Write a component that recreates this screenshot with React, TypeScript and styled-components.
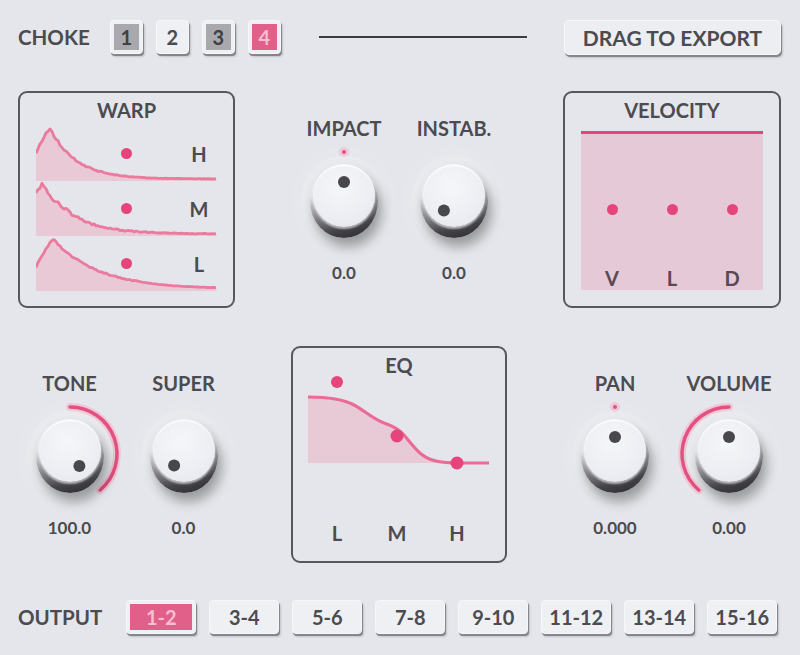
import React from "react"
import styled, { createGlobalStyle } from "styled-components"

const PINK = "#e5457a"
const INK = "#4b4b50"

const rand = (i: number, seed: number) => {
  const s = Math.sin(i * 12.9898 + seed * 78.233) * 43758.5453
  return s - Math.floor(s)
}

type WarpCfg = { letter: string; startY: number; peakX: number; peakY: number; decay: number; jitter: number; seed: number }

const warps: WarpCfg[] = [
  { letter: "H", startY: 28, peakX: 14, peakY: 2, decay: 26, jitter: 2.5, seed: 1 },
  { letter: "M", startY: 14, peakX: 6, peakY: 2, decay: 31, jitter: 4.5, seed: 2 },
  { letter: "L", startY: 32, peakX: 17, peakY: 3, decay: 45, jitter: 1.6, seed: 3 },
]

function warpPath(c: WarpCfg) {
  const base = 53
  const pts: string[] = []
  for (let x = 0; x <= 181; x += 2) {
    let y = x < c.peakX
      ? c.startY + (c.peakY - c.startY) * Math.pow(x / c.peakX, 0.8)
      : base - (base - c.peakY) * Math.exp(-(x - c.peakX) / c.decay)
    const amp = c.jitter * Math.min(1, (base - y + 4) / 25)
    y += (rand(x, c.seed) - 0.5) * amp
    pts.push(`${x},${Math.min(y, base).toFixed(1)}`)
  }
  const line = "M" + pts.join(" L")
  return { line, fill: line + " L181,55 L0,55 Z" }
}

const arcPath = (end: number) => {
  const r = 47
  const a = (end * Math.PI) / 180
  const x = 57 + r * Math.sin(a)
  const y = 57 - r * Math.cos(a)
  return `M57,10 A${r},${r} 0 ${Math.abs(end) > 180 ? 1 : 0} ${end > 0 ? 1 : 0} ${x.toFixed(1)},${y.toFixed(1)}`
}

type KnobProps = { label: string; value: string; angle: number; arc?: number; dot?: boolean }

const Knob = ({ label, value, angle, arc, dot }: KnobProps) => {
  const a = (angle * Math.PI) / 180
  const r = 16 - 2 * Math.cos(a)
  return (
    <KnobCol>
      <KnobLabel>{label}</KnobLabel>
      <KnobArea>
        <ArcSvg width="114" height="114">
          {arc !== undefined && (
            <>
              <path d={arcPath(arc)} stroke="#f2a9c0" strokeOpacity="0.55" strokeWidth="8" fill="none" strokeLinecap="round" />
              <path d={arcPath(arc)} stroke={PINK} strokeWidth="3.5" fill="none" strokeLinecap="round" />
            </>
          )}
          {dot && (
            <>
              <circle cx="57" cy="10" r="5" fill="#f4b6ca" opacity="0.7" />
              <circle cx="57" cy="10" r="2" fill={PINK} />
            </>
          )}
        </ArcSvg>
        <KnobBody>
          <KnobFace>
            <Pointer style={{ transform: `translate(${(r * Math.sin(a)).toFixed(1)}px, ${(-r * Math.cos(a)).toFixed(1)}px)` }} />
          </KnobFace>
        </KnobBody>
      </KnobArea>
      <KnobValue>{value}</KnobValue>
    </KnobCol>
  )
}

const outputs = ["1-2", "3-4", "5-6", "7-8", "9-10", "11-12", "13-14", "15-16"]
const chokes: { n: string; tone: "gray" | "none" | "pink" }[] = [
  { n: "1", tone: "gray" },
  { n: "2", tone: "none" },
  { n: "3", tone: "gray" },
  { n: "4", tone: "pink" },
]

const App = () => {
  return (
    <Page>
      <GlobalStyle />
      <TopRow>
        <RowLabel>CHOKE</RowLabel>
        <ChokeGroup>
          {chokes.map(c => (
            <SquareBtn key={c.n}>
              <BtnFill $tone={c.tone}>{c.n}</BtnFill>
            </SquareBtn>
          ))}
        </ChokeGroup>
        <Rule />
        <ExportBtn>DRAG TO EXPORT</ExportBtn>
      </TopRow>

      <Main>
        <Panel>
          <PanelTitle>WARP</PanelTitle>
          <WarpStack>
            {warps.map(w => {
              const p = warpPath(w)
              return (
                <WarpRow key={w.letter}>
                  <svg width="181" height="55">
                    <path d={p.fill} fill="#e9c9d6" />
                    <path d={p.line} fill="none" stroke="#ea7a9e" strokeWidth="2.8" strokeLinejoin="round" />
                  </svg>
                  <WarpOverlay>
                    <PinkDot $size={11} />
                    <WarpLetter>{w.letter}</WarpLetter>
                  </WarpOverlay>
                </WarpRow>
              )
            })}
          </WarpStack>
        </Panel>

        <KnobPair $center>
          <Knob label="IMPACT" value="0.0" angle={0} dot />
          <Knob label="INSTAB." value="0.0" angle={-145} />
        </KnobPair>

        <Panel>
          <PanelTitle>VELOCITY</PanelTitle>
          <VelArea>
            <VelDots>
              <PinkDot $size={11} />
              <PinkDot $size={11} />
              <PinkDot $size={11} />
            </VelDots>
            <LetterGrid $top={53} $color="#5a4852">
              <span>V</span>
              <span>L</span>
              <span>D</span>
            </LetterGrid>
          </VelArea>
        </Panel>

        <KnobPair>
          <Knob label="TONE" value="100.0" angle={148} arc={140} />
          <Knob label="SUPER" value="0.0" angle={-146} />
        </KnobPair>

        <EqPanel>
          <PanelTitle>EQ</PanelTitle>
          <EqSvg width="212" height="100">
            <path d="M15,20 C35,20 50,22 61,28 C72,34 80,42 91,46 C100,49 106,52 111,58 C118,66 124,75 131,79 C138,84 148,86 164,86 L15,86 Z" fill="#e8c9d6" />
            <path d="M15,20 C35,20 50,22 61,28 C72,34 80,42 91,46 C100,49 106,52 111,58 C118,66 124,75 131,79 C138,84 148,86 164,86 L196,86" fill="none" stroke="#ea6c95" strokeWidth="3.2" />
            <circle cx="44" cy="5" r="6" fill={PINK} />
            <circle cx="104" cy="59" r="6.5" fill={PINK} />
            <circle cx="164" cy="86" r="6.5" fill={PINK} />
          </EqSvg>
          <EqLetters $top={46} $color={INK}>
            <span>L</span>
            <span>M</span>
            <span>H</span>
          </EqLetters>
        </EqPanel>

        <KnobPair>
          <Knob label="PAN" value="0.000" angle={0} dot />
          <Knob label="VOLUME" value="0.00" angle={0} arc={-140} />
        </KnobPair>
      </Main>

      <OutputRow>
        <RowLabel>OUTPUT</RowLabel>
        <OutputGroup>
          {outputs.map((o, i) => (
            <WideBtn key={o}>
              <BtnFill $tone={i === 0 ? "pink" : "none"}>{o}</BtnFill>
            </WideBtn>
          ))}
        </OutputGroup>
      </OutputRow>
    </Page>
  )
}

export default App

const GlobalStyle = createGlobalStyle`
  body {
    margin: 0;
    background: #e4e6eb;
  }
`

const Page = styled.div`
  width: 800px;
  height: 655px;
  box-sizing: border-box;
  padding: 17px 19px 0 18px;
  background: #e4e6eb;
  color: ${INK};
  font-family: Lato, "Liberation Sans", sans-serif;
  font-weight: 700;
  display: flex;
  flex-direction: column;
  overflow: hidden;
`
const TopRow = styled.div`
  display: flex;
  align-items: center;
  height: 40px;
`
const RowLabel = styled.div`
  font-size: 20.5px;
  line-height: 24px;
`
const ChokeGroup = styled.div`
  display: flex;
  gap: 13px;
  margin-left: 20px;
`
const BtnBase = styled.div`
  box-sizing: border-box;
  height: 34px;
  padding: 3px;
  display: flex;
  background: #eef0f4;
  border: 1px solid #f6f7f9;
  border-radius: 4px;
  box-shadow: 1px 2px 0 #85858b, 2px 3px 2px rgba(0, 0, 0, 0.15);
`
const SquareBtn = styled(BtnBase)`
  width: 33px;
`
const WideBtn = styled(BtnBase)`
  width: 70px;
`
const BtnFill = styled.div<{ $tone: "gray" | "none" | "pink" }>`
  flex: 1;
  display: flex;
  align-items: center;
  justify-content: center;
  font-size: 20px;
  background: ${p => (p.$tone === "gray" ? "#a9a9ad" : p.$tone === "pink" ? "#e0608a" : "transparent")};
  color: ${p => (p.$tone === "pink" ? "#f7bfd0" : p.$tone === "gray" ? "#3f3f44" : INK)};
`
const Rule = styled.div`
  flex: 1;
  height: 2px;
  background: #3c3c40;
  margin: 0 37px 0 38px;
`
const ExportBtn = styled.div`
  box-sizing: border-box;
  width: 217px;
  height: 35px;
  display: flex;
  align-items: center;
  justify-content: center;
  font-size: 21px;
  background: #eceef2;
  border: 1px solid #f6f7f9;
  border-radius: 5px;
  box-shadow: 1px 2px 0 #85858b, 2px 3px 2px rgba(0, 0, 0, 0.15);
`
const Main = styled.div`
  display: grid;
  grid-template-columns: 217px 1fr 218px;
  grid-template-rows: 217px 217px;
  row-gap: 38px;
  margin-top: 34px;
`
const Panel = styled.div`
  box-sizing: border-box;
  border: 2px solid #58585c;
  border-radius: 9px;
  display: flex;
  flex-direction: column;
  align-items: center;
`
const EqPanel = styled(Panel)`
  width: 216px;
  justify-self: center;
`
const PanelTitle = styled.div`
  font-size: 20px;
  line-height: 24px;
  margin-top: 5px;
`
const WarpStack = styled.div`
  margin-top: 4px;
  width: 181px;
  display: flex;
  flex-direction: column;
`
const WarpRow = styled.div`
  display: grid;
  height: 55px;
  & > * {
    grid-area: 1 / 1;
  }
`
const WarpOverlay = styled.div`
  display: flex;
  align-items: center;
  padding-left: 85px;
`
const WarpLetter = styled.span`
  width: 22px;
  text-align: center;
  font-size: 20px;
  margin-left: auto;
  margin-right: 7px;
`
const PinkDot = styled.span<{ $size: number }>`
  display: block;
  width: ${p => p.$size}px;
  height: ${p => p.$size}px;
  border-radius: 50%;
  background: ${PINK};
`
const VelArea = styled.div`
  box-sizing: border-box;
  width: 182px;
  height: 159px;
  margin-top: 9px;
  border-top: 3px solid ${PINK};
  background: #e6c9d7;
  display: flex;
  flex-direction: column;
`
const VelDots = styled.div`
  display: grid;
  grid-template-columns: repeat(3, 60px);
  justify-content: center;
  justify-items: center;
  margin-top: 70px;
`
const LetterGrid = styled.div<{ $top: number; $color: string }>`
  display: grid;
  grid-template-columns: repeat(3, 60px);
  justify-content: center;
  justify-items: center;
  margin-top: ${p => p.$top}px;
  font-size: 20px;
  line-height: 20px;
  color: ${p => p.$color};
`
const EqLetters = styled(LetterGrid)`
  align-self: stretch;
  justify-content: start;
  padding-left: 14px;
`
const EqSvg = styled.svg`
  overflow: visible;
`
const KnobPair = styled.div<{ $center?: boolean }>`
  display: grid;
  grid-template-columns: ${p => (p.$center ? "110px 110px" : "1fr 1fr")};
  justify-content: center;
`
const KnobCol = styled.div`
  display: flex;
  flex-direction: column;
  align-items: center;
`
const KnobLabel = styled.div`
  font-size: 20px;
  line-height: 24px;
  margin-top: 25px;
  white-space: nowrap;
`
const KnobArea = styled.div`
  position: relative;
  box-sizing: border-box;
  width: 114px;
  height: 114px;
  margin-top: 2px;
  padding-top: 22px;
  display: flex;
  justify-content: center;
`
const ArcSvg = styled.svg`
  position: absolute;
  left: 0;
  top: 0;
  overflow: visible;
`
const KnobBody = styled.div`
  position: relative;
  width: 68px;
  height: 74px;
  border-radius: 50%;
  display: flex;
  justify-content: center;
  background: linear-gradient(165deg, #ffffff 0%, #e2e3e6 36%, #86868b 60%, #434347 80%, #2a2a2d 100%);
  box-shadow: 4px 9px 12px rgba(0, 0, 0, 0.34), 0 0 0 9px rgba(255, 255, 255, 0.12),
    0 0 0 18px rgba(255, 255, 255, 0.06);
`
const KnobFace = styled.div`
  width: 62px;
  height: 62px;
  margin-top: 1px;
  border-radius: 50%;
  display: flex;
  align-items: center;
  justify-content: center;
  background: radial-gradient(circle at 45% 35%, #f5f6f9 0%, #eceef3 60%, #e2e4ea 100%);
  box-shadow: inset 0 1px 1px #ffffff, 0 2px 2px rgba(255, 255, 255, 0.6);
`
const Pointer = styled.span`
  width: 12px;
  height: 12px;
  border-radius: 50%;
  background: #48484c;
`
const KnobValue = styled.div`
  font-size: 17px;
  line-height: 20px;
  margin-top: 7px;
`
const OutputRow = styled.div`
  display: flex;
  align-items: center;
  margin-top: 37px;
`
const OutputGroup = styled.div`
  display: flex;
  gap: 13px;
  margin-left: 24px;
`
